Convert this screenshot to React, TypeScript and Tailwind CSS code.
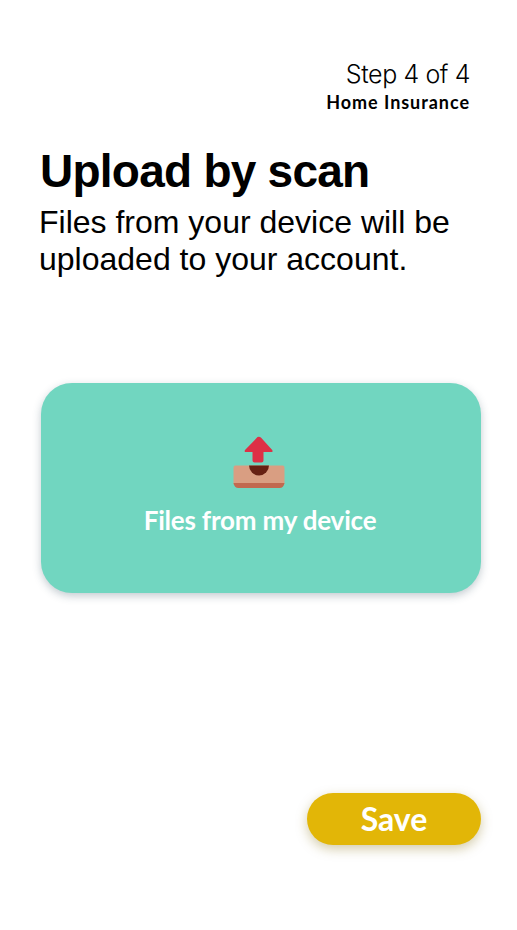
function UploadTray() {
  return (
    <svg className="h-[54px] w-[54px]" viewBox="0 0 54 54" aria-hidden="true">
      <path
        d="M25.5 2.1 13 15.1Q12 17 14 17H20.5V25.5Q20.5 27.6 22.6 27.6H29.4Q31.5 27.6 31.5 25.5V17H39.5Q41.4 17 40.2 15.1L28.9 2.5Q27.2 1.2 25.5 2.1Z"
        fill="#dd3046"
      />
      <path d="M3 30.5H51Q52.5 30.5 52.5 33V49H1.5V33Q1.5 30.5 3 30.5Z" fill="#d99e82" />
      <path d="M1.5 48H52.5Q51.7 53 47.5 53H6.5Q2.3 53 1.5 48Z" fill="#c1694f" />
      <path d="M17 30.5H37A10 10 0 0 1 17 30.5Z" fill="#662113" />
    </svg>
  );
}

export default function App() {
  return (
    <main className="flex h-[930px] w-[517px] flex-col bg-white pl-[39px] pr-9 text-black">
      <header className="flex flex-col items-end pr-3 pt-[58px]">
        <p className="-mr-px whitespace-nowrap font-[Inter,sans-serif] text-[25px] font-light leading-8 tracking-[-0.4px]">
          Step 4 of 4
        </p>
        <p className="-mr-px whitespace-nowrap font-[Lato,sans-serif] text-[18px] font-bold leading-6 tracking-[0.95px]">
          Home Insurance
        </p>
      </header>
      <h1 className="ml-px mt-8 whitespace-nowrap font-['Liberation_Sans',Arial,sans-serif] text-[46px] font-bold leading-[50px] tracking-[-0.75px]">
        Upload by scan
      </h1>
      <p className="mt-2 whitespace-nowrap font-['Liberation_Sans',Arial,sans-serif] text-[32px] leading-[37px]">
        Files from your device will be
        <br />
        uploaded to your account.
      </p>
      <button className="ml-0.5 mt-[105px] flex h-[210px] w-[440px] shrink-0 flex-col items-center rounded-[31px] bg-[#71d6c0] pt-[52px] text-white shadow-[0_3px_8px_rgba(40,70,85,0.28)]">
        <span className="-ml-1">
          <UploadTray />
        </span>
        <span className="-ml-0.5 mt-[15px] whitespace-nowrap font-[Lato,sans-serif] text-[26px] font-bold leading-8 tracking-[-0.2px]">
          Files from my device
        </span>
      </button>
      <button className="mt-[200px] h-[52px] w-[174px] shrink-0 self-end rounded-full bg-[#e2b607] pb-px font-[Lato,sans-serif] text-[32px] font-bold leading-[51px] text-white shadow-[0_4px_12px_rgba(130,105,10,0.35)]">
        Save
      </button>
    </main>
  );
}
